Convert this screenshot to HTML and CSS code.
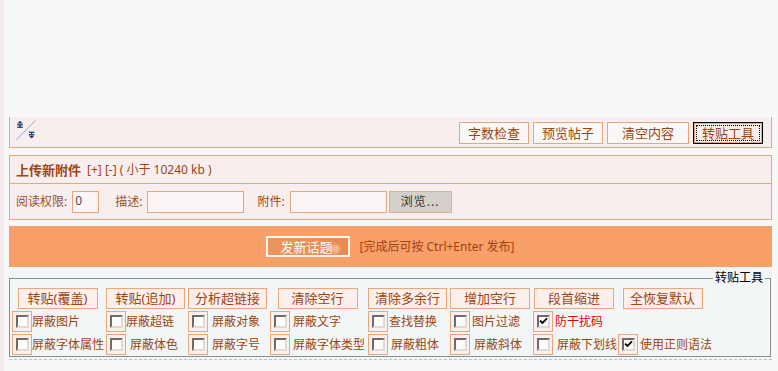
FILE: index.html
```html
<!DOCTYPE html>
<html lang="zh-CN">
<head>
<meta charset="utf-8">
<title>发新话题</title>
<link rel="stylesheet" href="styles.css">
</head>
<body>
<div class="page">
  <div class="editor"></div>

  <div class="toolbar">
    <span class="resize-icon">
      <svg width="20" height="20" viewBox="0 0 20 20">
        <line x1="0.5" y1="19.5" x2="19.5" y2="0.5" stroke="#8ea6cc" stroke-width="1"/>
        <path d="M4 0.8 L6.8 3.6 L1.2 3.6 Z" fill="#1d3f73"/>
        <rect x="1.2" y="4.2" width="5.6" height="1.3" fill="#1d3f73"/>
        <rect x="3.4" y="4.2" width="1.3" height="3" fill="#1d3f73"/>
        <rect x="1.2" y="6.6" width="5.6" height="1.3" fill="#1d3f73"/>
        <rect x="12.8" y="11.6" width="5.6" height="1.3" fill="#1d3f73"/>
        <rect x="15" y="12" width="1.3" height="3" fill="#1d3f73"/>
        <rect x="12.8" y="14.1" width="5.6" height="1.3" fill="#1d3f73"/>
        <path d="M15.6 18.6 L18.4 15.8 L12.8 15.8 Z" fill="#1d3f73"/>
      </svg>
    </span>
    <div class="tb-buttons">
      <button class="tb-btn">字数检查</button>
      <button class="tb-btn">预览帖子</button>
      <button class="tb-btn wide">清空内容</button>
      <button class="tb-btn active">转贴工具</button>
    </div>
  </div>

  <div class="upload">
    <div class="up-head"><b class="up-title">上传新附件</b><span class="up-meta">[+] [-] ( 小于 10240 kb )</span></div>
    <div class="up-row">
      <span class="up-label">阅读权限:</span>
      <span class="inp inp-perm">0</span>
      <span class="up-label gap-l">描述:</span>
      <span class="inp inp-wide"></span>
      <span class="up-label gap-m">附件:</span>
      <span class="inp inp-wide"></span>
      <button class="browse">浏览...</button>
    </div>
  </div>

  <div class="submitbar">
    <button class="submit-btn">发新话题</button>
    <span class="hint">[完成后可按 Ctrl+Enter 发布]</span>
  </div>

  <div class="tools">
    <fieldset class="tools-set">
      <legend class="tools-legend">转贴工具</legend>
      <div class="tools-grid">
        <div class="cell-btn"><button class="tool-btn">转贴(覆盖)</button></div>
        <div class="cell-btn"><button class="tool-btn">转贴(追加)</button></div>
        <div class="cell-btn"><button class="tool-btn">分析超链接</button></div>
        <div class="cell-btn"><button class="tool-btn">清除空行</button></div>
        <div class="cell-btn"><button class="tool-btn">清除多余行</button></div>
        <div class="cell-btn"><button class="tool-btn">增加空行</button></div>
        <div class="cell-btn"><button class="tool-btn">段首缩进</button></div>
        <div class="cell-btn"><button class="tool-btn">全恢复默认</button></div>

        <div class="cell-cb"><span class="cb-wrap"><span class="cb"></span></span><span class="lbl m0">屏蔽图片</span></div>
        <div class="cell-cb"><span class="cb-wrap"><span class="cb"></span></span><span class="lbl m0">屏蔽超链</span></div>
        <div class="cell-cb"><span class="cb-wrap"><span class="cb"></span></span><span class="lbl m4">屏蔽对象</span></div>
        <div class="cell-cb"><span class="cb-wrap"><span class="cb"></span></span><span class="lbl m3">屏蔽文字</span></div>
        <div class="cell-cb"><span class="cb-wrap"><span class="cb"></span></span><span class="lbl m1">查找替换</span></div>
        <div class="cell-cb"><span class="cb-wrap"><span class="cb"></span></span><span class="lbl m2">图片过滤</span></div>
        <div class="cell-cb"><span class="cb-wrap"><span class="cb checked"><svg width="9" height="9" viewBox="0 0 9 9"><path d="M1 3.6 L3.4 6 L8 1.4" fill="none" stroke="#000" stroke-width="1.8"/></svg></span></span><span class="lbl m2 red">防干扰码</span></div>
        <div class="cell-cb"></div>

        <div class="cell-cb"><span class="cb-wrap"><span class="cb"></span></span><span class="lbl m0">屏蔽字体属性</span></div>
        <div class="cell-cb"><span class="cb-wrap"><span class="cb"></span></span><span class="lbl m4">屏蔽体色</span></div>
        <div class="cell-cb"><span class="cb-wrap"><span class="cb"></span></span><span class="lbl m4">屏蔽字号</span></div>
        <div class="cell-cb"><span class="cb-wrap"><span class="cb"></span></span><span class="lbl m3">屏蔽字体类型</span></div>
        <div class="cell-cb"><span class="cb-wrap"><span class="cb"></span></span><span class="lbl m3">屏蔽粗体</span></div>
        <div class="cell-cb"><span class="cb-wrap"><span class="cb"></span></span><span class="lbl m4">屏蔽斜体</span></div>
        <div class="cell-cb"><span class="cb-wrap"><span class="cb"></span></span><span class="lbl m4">屏蔽下划线</span></div>
        <div class="cell-cb"><span class="cb-wrap"><span class="cb checked"><svg width="9" height="9" viewBox="0 0 9 9"><path d="M1 3.6 L3.4 6 L8 1.4" fill="none" stroke="#000" stroke-width="1.8"/></svg></span></span><span class="lbl m2">使用正则语法</span></div>
      </div>
    </fieldset>
  </div>
</div>
</body>
</html>
```

FILE: styles.css
```css
* { box-sizing: border-box; }

html, body { margin: 0; }

body {
  background: #f8f8f8;
  border-left: 4px solid #f5eded;
  min-height: 371px;
  font: 12px/16px "Noto Sans", "Noto Sans CJK SC", sans-serif;
  color: #9c4613;
}

.page {
  padding-left: 5px;
  width: 768px;
}

.editor { height: 117px; }

/* toolbar */
.toolbar {
  height: 31px;
  background: #f9eeee;
  border: 1px solid #eba67c;
  border-top: 0;
  display: flex;
  align-items: flex-start;
  justify-content: space-between;
  padding: 0 8px 0 6px;
}

.resize-icon {
  display: block;
  width: 20px;
  height: 20px;
  margin-top: 3px;
}
.resize-icon svg { display: block; }

.tb-buttons {
  display: flex;
  gap: 4px;
  margin-top: 5px;
}

.tb-btn {
  width: 70px;
  height: 22px;
  padding: 0;
  border: 1px solid #e9a67c;
  background: #faf7f7;
  color: #9c4613;
  font: inherit;
  font-size: 13px;
  line-height: 18px;
}
.tb-btn.wide { width: 82px; }
.tb-btn.active {
  border-color: #000;
  background: #f9efea;
  box-shadow: inset 0 0 0 1px #e9a67c;
  outline: 1px dotted #000;
  outline-offset: -4px;
}

/* upload */
.upload {
  margin-top: 7px;
  border: 1px solid #eba67c;
  background: #f9eeee;
}

.up-head {
  height: 28px;
  border-bottom: 1px solid #eba67c;
  display: flex;
  align-items: center;
  padding-left: 6px;
}
.up-title { font-weight: bold; font-size: 13px; }
.up-meta { margin-left: 6px; }

.up-row {
  height: 35px;
  display: flex;
  align-items: center;
  padding-left: 6px;
}

.up-label { color: #96552c; }
.up-label.gap-l { margin-left: 16px; }
.up-label.gap-m { margin-left: 13px; color: #9c4613; }

.inp {
  display: block;
  height: 22px;
  margin-left: 5px;
  border: 1px solid #e9a67c;
  background: #fbf5f5;
  color: #5a4a60;
  padding: 1px 0 0 2px;
  line-height: 16px;
}
.inp-perm { width: 27px; }
.inp-wide { width: 97px; }

.browse {
  width: 63px;
  height: 22px;
  margin-left: 2px;
  padding: 0;
  border: 1px solid #e3b08c;
  background: #d5d1c9;
  color: #333;
  font: inherit;
  letter-spacing: 1px;
}

/* submit bar */
.submitbar {
  margin-top: 6px;
  height: 41px;
  background: #f99f6a;
  display: flex;
  align-items: center;
  justify-content: center;
  gap: 9px;
}

.submit-btn {
  width: 84px;
  height: 21px;
  padding: 0 4px 0 0;
  border: 2px solid #fff6ee;
  background:
    radial-gradient(circle at 84% 65%, #f6b58c 0 3px, transparent 6px),
    linear-gradient(90deg, #ea9560, #e98a53);
  color: #fff;
  font: inherit;
  font-size: 13px;
  line-height: 16px;
}

.hint { color: #a2440f; }

/* tools */
.tools {
  background: #f2f6f6;
  padding: 3px 0 2px;
  border-bottom: 1px dashed #bfbfbf;
}

.tools-set {
  margin: 0 1px 0 0;
  padding: 2px 0 1px 2px;
  border: 1px solid #879090;
  min-width: 0;
}

.tools-legend {
  margin-left: auto;
  margin-right: 5px;
  padding: 0 2px;
  color: #000;
  font-size: 12px;
  line-height: 16px;
}

.tools-grid {
  display: grid;
  grid-template-columns: 94px 82px 82px 98px 82px 83px 85px 92px;
  grid-template-rows: 21px 21px 21px;
  row-gap: 2px;
}

.cell-btn {
  display: flex;
  justify-content: center;
  padding-right: 3px;
}

.tool-btn {
  width: 80px;
  height: 21px;
  padding: 0;
  border: 1px solid #eba67c;
  background: #fcefec;
  color: #9c4613;
  font: inherit;
  font-size: 13px;
  line-height: 17px;
}

.cell-cb {
  display: flex;
  align-items: center;
  white-space: nowrap;
}

.cb-wrap {
  flex: none;
  width: 20px;
  height: 21px;
  border: 1px solid #e9a67c;
  background: #fbf0ee;
  display: flex;
  align-items: center;
  justify-content: center;
}

.cb {
  display: flex;
  align-items: center;
  justify-content: center;
  width: 13px;
  height: 13px;
  border: 2px solid;
  border-color: #6b6b6b #dedad4 #dedad4 #6b6b6b;
  background: #fcfcfc;
}
.cb svg { display: block; }

.lbl { color: #9c4613; }
.lbl.m0 { margin-left: 0; }
.lbl.m1 { margin-left: 1px; }
.lbl.m2 { margin-left: 2px; }
.lbl.m3 { margin-left: 3px; }
.lbl.m4 { margin-left: 4px; }
.lbl.red { color: #e00000; }
```
